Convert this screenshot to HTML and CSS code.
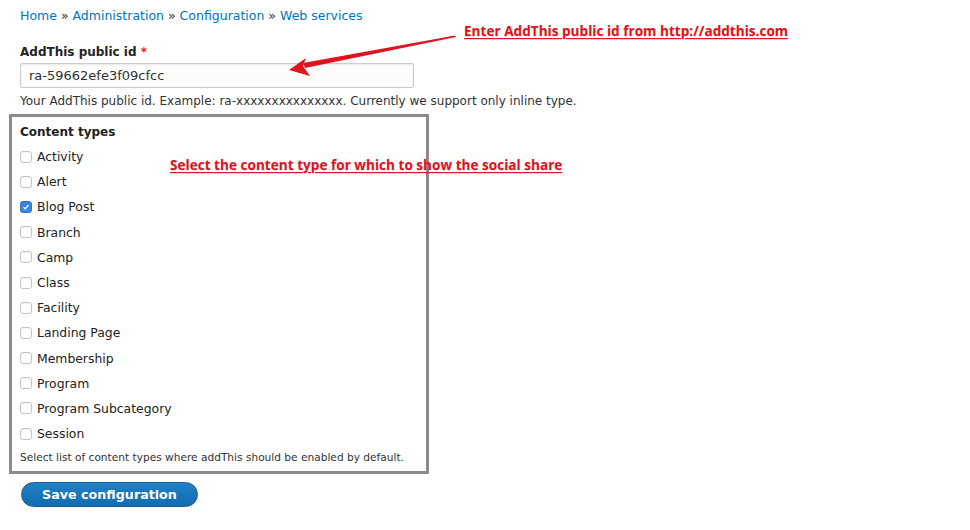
FILE: index.html
```html
<!DOCTYPE html>
<html>
<head>
<meta charset="utf-8">
<link rel="stylesheet" href="styles.css">
</head>
<body>
<div class="page">
  <nav class="breadcrumb"><a href="#">Home</a> » <a href="#">Administration</a> » <a href="#">Configuration</a> » <a href="#">Web services</a></nav>
  <div class="field">
    <label class="label">AddThis public id <span class="req">*</span></label>
    <div class="input">ra-59662efe3f09cfcc</div>
    <div class="desc">Your AddThis public id. Example: ra-xxxxxxxxxxxxxxx. Currently we support only inline type.</div>
  </div>
  <div class="types">
    <div class="label">Content types</div>
    <ul class="checks">
      <li><span class="cb"></span>Activity</li>
      <li><span class="cb"></span>Alert</li>
      <li><span class="cb on"><svg viewBox="0 0 12 12" width="12" height="12"><path d="M3 6.2 L5 8.3 L9 3.6" fill="none" stroke="#fff" stroke-width="1.4"/></svg></span>Blog Post</li>
      <li><span class="cb"></span>Branch</li>
      <li><span class="cb"></span>Camp</li>
      <li><span class="cb"></span>Class</li>
      <li><span class="cb"></span>Facility</li>
      <li><span class="cb"></span>Landing Page</li>
      <li><span class="cb"></span>Membership</li>
      <li><span class="cb"></span>Program</li>
      <li><span class="cb"></span>Program Subcategory</li>
      <li><span class="cb"></span>Session</li>
    </ul>
    <div class="desc small">Select list of content types where addThis should be enabled by default.</div>
  </div>
  <button class="save">Save configuration</button>
</div>
<div class="note note1">Enter AddThis public id from http://addthis.com</div>
<div class="note note2">Select the content type for which to show the social share</div>
<svg class="arrow" width="970" height="530" viewBox="0 0 970 530">
  <path d="M455 35.5 L456 37 L305 68 L303 63 Z" fill="#e0131f"/>
  <path d="M289 70 L306 58 L303 66 L310 76 Z" fill="#e0131f"/>
</svg>
</body>
</html>
```
FILE: styles.css
```css
html, body { margin: 0; padding: 0; background: #fff; }
body { width: 970px; height: 530px; position: relative; overflow: hidden; font-family: "DejaVu Sans", sans-serif; color: #222; }
.page { padding: 8px 0 0 20px; }
.breadcrumb { font-size: 12.5px; line-height: 16px; color: #333; }
.breadcrumb a { color: #0074bd; text-decoration: none; }
.field { margin-top: 20px; }
.label { display: block; font-weight: bold; font-size: 12px; line-height: 16px; color: #222; }
.req { color: #e32700; }
.input { margin-top: 3px; width: 384px; height: 23px; border: 1px solid #ccc; border-radius: 2px; background: #fcfcfa; font-size: 13px; line-height: 23px; padding-left: 8px; color: #333; box-shadow: inset 0 1px 2px rgba(0,0,0,0.08); }
.desc { font-size: 12px; line-height: 14px; color: #333; margin-top: 6px; white-space: nowrap; }
.desc.small { font-size: 10.6px; }
.types { margin: 6px 0 0 -11px; width: 396px; border: 3px solid #8b8b8b; padding: 7px 10px 7px 8px; }
.checks { list-style: none; margin: 4px 0 0 0; padding: 0; }
.checks li { display: flex; align-items: center; height: 25.2px; font-size: 12.4px; color: #222; }
.cb { width: 10px; height: 10px; border: 1px solid #c4c4c4; border-radius: 3px; margin-right: 5px; background: #fff; display: inline-flex; box-shadow: inset 0 1px 1px rgba(0,0,0,0.05); }
.cb.on { background: #3a87e0; border-color: #2d73c8; }
.cb svg { display: block; width: 10px; height: 10px; }
.types .desc { margin-top: 4px; }
.save { display: block; margin-top: 8px; margin-left: 1px; width: 177px; height: 25px; border-radius: 13px; border: 1px solid #1e5c90; background: linear-gradient(#1f80c6, #136caf); color: #fff; font-family: "DejaVu Sans", sans-serif; font-weight: bold; font-size: 12.7px; padding: 0; }
.note { position: absolute; color: #e0131f; font-family: "Open Sans", sans-serif; font-weight: bold; font-size: 13.6px; text-decoration: underline; text-decoration-thickness: 1px; text-underline-offset: 2px; text-shadow: 0 1px 1px rgba(0,0,0,0.15); white-space: nowrap; }
.note1 { left: 464px; top: 21px; }
.note2 { left: 170px; top: 155px; }
.arrow { position: absolute; left: 0; top: 0; pointer-events: none; }
```
